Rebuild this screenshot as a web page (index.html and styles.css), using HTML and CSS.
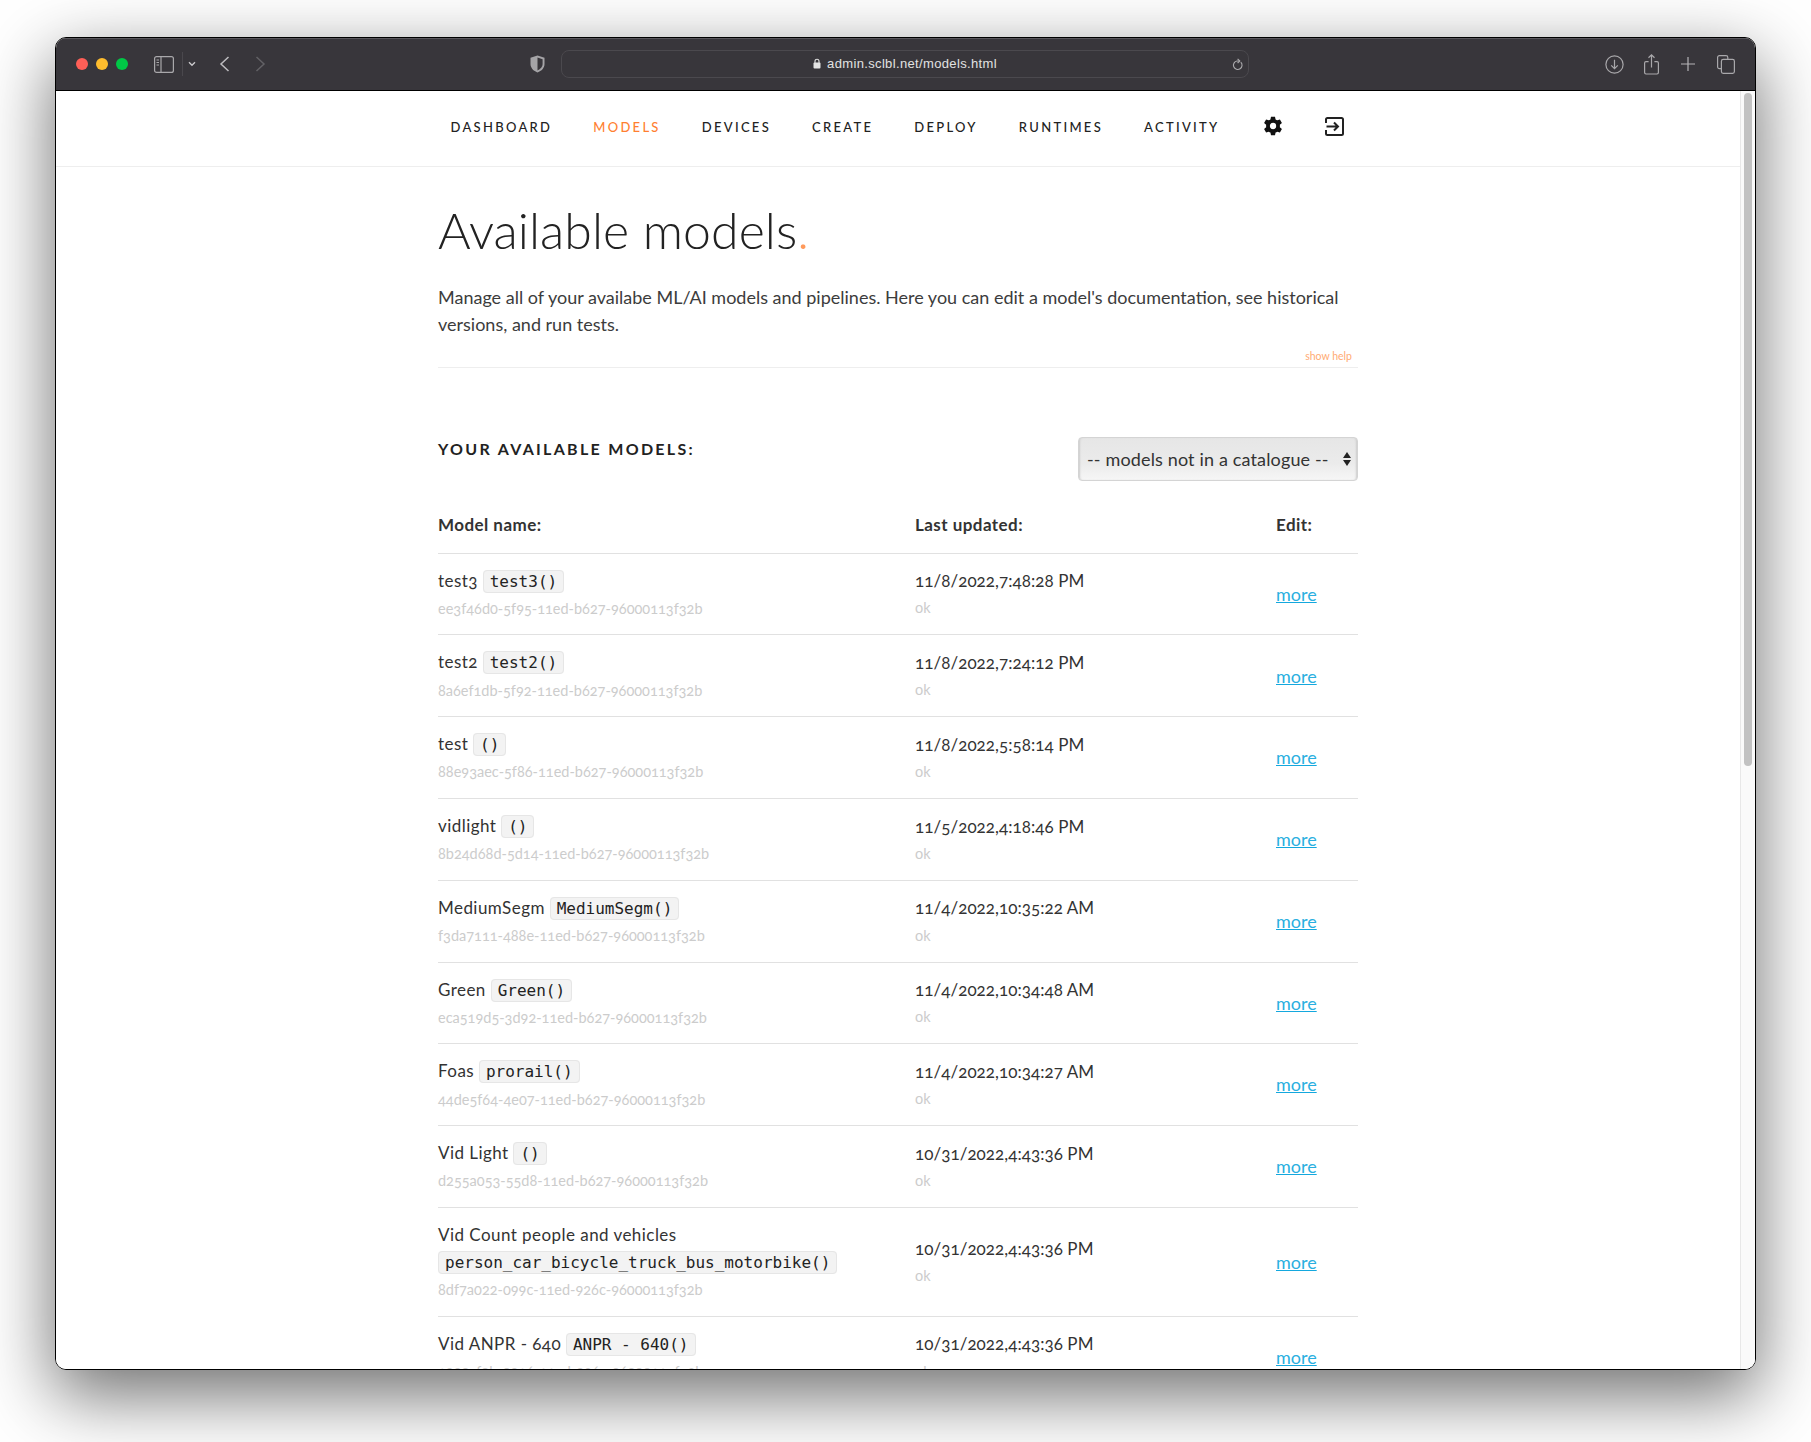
FILE: index.html
```html
<!DOCTYPE html>
<html lang="en">
<head>
    <meta charset="UTF-8">
    <meta name="viewport" content="width=device-width, initial-scale=1.0">
    <title>Available models</title>
    <link rel="stylesheet" href="styles.css">
</head>
<body>

<div class="window">
    <div class="toolbar">
        <span class="dot dot-red"></span>
        <span class="dot dot-yellow"></span>
        <span class="dot dot-green"></span>

        <svg class="tb-icon tb-sidebar" width="20" height="17" viewBox="0 0 20 17" fill="none" stroke="#a9a8ab" stroke-width="1.2">
            <rect x="0.6" y="0.6" width="18.8" height="15.8" rx="2"/>
            <path d="M7 0.6V16.4"/>
            <path d="M2.5 4H5M2.5 6.5H5M2.5 9H5" stroke-width="1"/>
        </svg>
        <span class="tb-sep"></span>
        <svg class="tb-icon tb-chevron" width="8" height="6" viewBox="0 0 8 6" fill="none" stroke="#c8c7ca" stroke-width="1.4">
            <path d="M1 1.2L4 4.2L7 1.2"/>
        </svg>
        <svg class="tb-icon tb-back" width="11" height="16" viewBox="0 0 11 16" fill="none" stroke="#bdbcbf" stroke-width="1.5">
            <path d="M9.5 1L2 8L9.5 15"/>
        </svg>
        <svg class="tb-icon tb-forward" width="11" height="16" viewBox="0 0 11 16" fill="none" stroke="#626165" stroke-width="1.5">
            <path d="M1.5 1L9 8L1.5 15"/>
        </svg>
        <svg class="tb-icon tb-shield" width="15" height="18" viewBox="0 0 15 18">
            <path d="M7.5 0.5L14.5 2.8V9C14.5 13 11.5 16 7.5 17.5C3.5 16 0.5 13 0.5 9V2.8Z" fill="#a5a4a7"/>
            <path d="M7.5 2.6L12.6 4.3V9C12.6 12 10.5 14.2 7.5 15.4Z" fill="#38363b"/>
        </svg>

        <div class="address">
            <svg class="lock" width="8" height="11" viewBox="0 0 8 11">
                <path d="M2 5V3.2C2 0.6 6 0.6 6 3.2V5" fill="none" stroke="#e4e4e4" stroke-width="1.1"/>
                <rect x="0.5" y="4.6" width="7" height="6" rx="1" fill="#e4e4e4"/>
            </svg>
            <span class="url">admin.sclbl.net/models.html</span>
            <svg class="reload" width="11" height="13" viewBox="0 0 11 13" fill="none" stroke="#a9a8ab" stroke-width="1.1">
                <path d="M8.8 4.2A4.3 4.3 0 1 1 5 3H7.5"/>
                <path d="M5.6 0.8L7.8 3L5.6 5"/>
            </svg>
        </div>

        <svg class="tb-icon tb-download" width="19" height="19" viewBox="0 0 19 19" fill="none" stroke="#a9a8ab" stroke-width="1.2">
            <circle cx="9.5" cy="9.5" r="8.6"/>
            <path d="M9.5 4.8V13.6M6.2 10.4L9.5 13.7L12.8 10.4"/>
        </svg>
        <svg class="tb-icon tb-share" width="15" height="21" viewBox="0 0 15 21" fill="none" stroke="#a9a8ab" stroke-width="1.2">
            <path d="M4.6 7.6H2A1.4 1.4 0 0 0 0.6 9V18.6A1.4 1.4 0 0 0 2 20H13A1.4 1.4 0 0 0 14.4 18.6V9A1.4 1.4 0 0 0 13 7.6H10.4"/>
            <path d="M7.5 13.5V1M4.5 3.8L7.5 0.9L10.5 3.8"/>
        </svg>
        <svg class="tb-icon tb-plus" width="14" height="14" viewBox="0 0 14 14" fill="none" stroke="#b5b4b7" stroke-width="1.2">
            <path d="M7 0V14M0 7H14"/>
        </svg>
        <svg class="tb-icon tb-tabs" width="18" height="19" viewBox="0 0 18 19" fill="none" stroke="#a9a8ab" stroke-width="1.2">
            <path d="M4.4 13.6H2.4A1.8 1.8 0 0 1 0.6 11.8V2.4A1.8 1.8 0 0 1 2.4 0.6H9A1.8 1.8 0 0 1 10.8 2.4V4.4"/>
            <rect x="4.4" y="4.4" width="13" height="14" rx="1.8"/>
        </svg>
    </div>

    <div class="viewport">
        <nav class="topnav">
            <a href="#">DASHBOARD</a>
            <a href="#" class="active">MODELS</a>
            <a href="#">DEVICES</a>
            <a href="#">CREATE</a>
            <a href="#">DEPLOY</a>
            <a href="#">RUNTIMES</a>
            <a href="#">ACTIVITY</a>
            <svg class="nav-gear" width="20" height="20" viewBox="0 0 24 24">
                <path fill="#111" fill-rule="evenodd" d="M9.6 0.8H14.4L15.1 4.1C15.8 4.4 16.5 4.8 17.1 5.2L20.3 4.2L22.7 8.3L20.2 10.6C20.3 11.4 20.3 12.6 20.2 13.4L22.7 15.7L20.3 19.8L17.1 18.8C16.5 19.2 15.8 19.6 15.1 19.9L14.4 23.2H9.6L8.9 19.9C8.2 19.6 7.5 19.2 6.9 18.8L3.7 19.8L1.3 15.7L3.8 13.4C3.7 12.6 3.7 11.4 3.8 10.6L1.3 8.3L3.7 4.2L6.9 5.2C7.5 4.8 8.2 4.4 8.9 4.1ZM12 8.2A3.8 3.8 0 1 0 12 15.8A3.8 3.8 0 1 0 12 8.2Z"/>
            </svg>
            <svg class="nav-exit" width="19" height="19" viewBox="0 0 19 19" fill="none" stroke="#222" stroke-width="2">
                <path d="M1 6V2.5A1.5 1.5 0 0 1 2.5 1H16.5A1.5 1.5 0 0 1 18 2.5V16.5A1.5 1.5 0 0 1 16.5 18H2.5A1.5 1.5 0 0 1 1 16.5V13"/>
                <path d="M1.5 9.5H12.5M9 5.5L13 9.5L9 13.5"/>
            </svg>
        </nav>

        <main class="content">
            <h1>Available models<span class="orange">.</span></h1>
            <p class="intro">Manage all of your availabe ML/AI models and pipelines. Here you can edit a model's documentation, see historical versions, and run tests.</p>
            <div class="help-row"><a href="#" class="show-help">show help</a></div>

            <div class="list-head">
                <h3>YOUR AVAILABLE MODELS:</h3>
                <div class="select-wrap">
                    <select class="catalogue">
                        <option>-- models not in a catalogue --</option>
                    </select>
                </div>
            </div>

            <table class="models">
                <thead>
                    <tr><th class="col-name">Model name:</th><th class="col-date">Last updated:</th><th>Edit:</th></tr>
                </thead>
                <tbody>
                    <tr>
                        <td>test3 <code>test3()</code><small>ee3f46d0-5f95-11ed-b627-96000113f32b</small></td>
                        <td>11/8/2022,7:48:28 PM<small>ok</small></td>
                        <td><a href="#" class="more">more</a></td>
                    </tr>
                    <tr>
                        <td>test2 <code>test2()</code><small>8a6ef1db-5f92-11ed-b627-96000113f32b</small></td>
                        <td>11/8/2022,7:24:12 PM<small>ok</small></td>
                        <td><a href="#" class="more">more</a></td>
                    </tr>
                    <tr>
                        <td>test <code>()</code><small>88e93aec-5f86-11ed-b627-96000113f32b</small></td>
                        <td>11/8/2022,5:58:14 PM<small>ok</small></td>
                        <td><a href="#" class="more">more</a></td>
                    </tr>
                    <tr>
                        <td>vidlight <code>()</code><small>8b24d68d-5d14-11ed-b627-96000113f32b</small></td>
                        <td>11/5/2022,4:18:46 PM<small>ok</small></td>
                        <td><a href="#" class="more">more</a></td>
                    </tr>
                    <tr>
                        <td>MediumSegm <code>MediumSegm()</code><small>f3da7111-488e-11ed-b627-96000113f32b</small></td>
                        <td>11/4/2022,10:35:22 AM<small>ok</small></td>
                        <td><a href="#" class="more">more</a></td>
                    </tr>
                    <tr>
                        <td>Green <code>Green()</code><small>eca519d5-3d92-11ed-b627-96000113f32b</small></td>
                        <td>11/4/2022,10:34:48 AM<small>ok</small></td>
                        <td><a href="#" class="more">more</a></td>
                    </tr>
                    <tr>
                        <td>Foas <code>prorail()</code><small>44de5f64-4e07-11ed-b627-96000113f32b</small></td>
                        <td>11/4/2022,10:34:27 AM<small>ok</small></td>
                        <td><a href="#" class="more">more</a></td>
                    </tr>
                    <tr>
                        <td>Vid Light <code>()</code><small>d255a053-55d8-11ed-b627-96000113f32b</small></td>
                        <td>10/31/2022,4:43:36 PM<small>ok</small></td>
                        <td><a href="#" class="more">more</a></td>
                    </tr>
                    <tr>
                        <td>Vid Count people and vehicles <code class="code-block">person_car_bicycle_truck_bus_motorbike()</code><small>8df7a022-099c-11ed-926c-96000113f32b</small></td>
                        <td>10/31/2022,4:43:36 PM<small>ok</small></td>
                        <td><a href="#" class="more">more</a></td>
                    </tr>
                    <tr>
                        <td>Vid ANPR - 640 <code>ANPR - 640()</code><small>1990cf0b-0916-11ed-926c-96000113f32b</small></td>
                        <td>10/31/2022,4:43:36 PM<small>ok</small></td>
                        <td><a href="#" class="more">more</a></td>
                    </tr>
                </tbody>
            </table>
        </main>

        <div class="scrolltrack"><div class="scrollthumb"></div></div>
    </div>
</div>

</body>
</html>
```
FILE: styles.css
```css
html, body {
    margin: 0;
    height: 100%;
}
body {
    background: #fff;
    padding: 37px 55px 74px 55px;
    box-sizing: border-box;
    font-family: "Lato", "Open Sans", sans-serif;
    font-variant-numeric: oldstyle-nums;
    color: #333;
    overflow: hidden;
}

/* browser window */
.window {
    height: 1331px;
    border: 1px solid #000;
    border-radius: 11px;
    overflow: hidden;
    display: flex;
    flex-direction: column;
    box-shadow: 0 24px 70px 2px rgba(0, 0, 0, 0.56);
}
.toolbar {
    height: 52px;
    flex: none;
    background: #38363b;
    border-bottom: 1px solid #000;
    box-shadow: inset 0 1px 0 #59575c;
    display: flex;
    align-items: center;
    padding-left: 20px;
}
.dot {
    width: 12px;
    height: 12px;
    border-radius: 50%;
    margin-right: 8px;
}
.dot-red { background: #ff5f57; }
.dot-yellow { background: #ffbd2e; }
.dot-green { background: #00c846; }
.tb-icon { flex: none; }
.tb-sidebar { margin-left: 18px; }
.tb-sep {
    width: 1px;
    height: 24px;
    background: #4a484d;
    margin-left: 8px;
}
.tb-chevron { margin-left: 5px; }
.tb-back { margin-left: 23px; }
.tb-forward { margin-left: 25px; }
.tb-shield { margin-left: 264px; }
.address {
    width: 688px;
    height: 28px;
    box-sizing: border-box;
    margin: -1px 0 0 16px;
    border: 1px solid #4b494e;
    border-radius: 8px;
    display: flex;
    align-items: center;
    justify-content: center;
    position: relative;
    color: #e2e2e2;
    font-family: "Liberation Sans", sans-serif;
    font-size: 13px;
    letter-spacing: 0.35px;
}
.lock { margin-right: 6px; }
.reload {
    position: absolute;
    right: 5px;
    top: 7px;
}
.tb-download { margin-left: 356px; }
.tb-share { margin-left: 20px; }
.tb-plus { margin-left: 22px; }
.tb-tabs { margin-left: 22px; }

/* page inside the window */
.viewport {
    flex: 1;
    position: relative;
    overflow: hidden;
    background: #fff;
    padding-right: 15px;
}
.scrolltrack {
    position: absolute;
    top: 0;
    right: 0;
    bottom: 0;
    width: 15px;
    background: #fafafa;
    border-left: 1px solid #e8e8e8;
    box-sizing: border-box;
}
.scrollthumb {
    width: 8px;
    height: 673px;
    margin: 2px 0 0 3px;
    border-radius: 4px;
    background: #c2c2c2;
}

.topnav {
    height: 75px;
    border-bottom: 1px solid #eee;
    display: flex;
    align-items: center;
    justify-content: center;
    padding-right: 2px;
}
.topnav a {
    font-size: 13px;
    letter-spacing: 2.3px;
    color: #222;
    text-decoration: none;
    margin: -3px 41px 0 0;
    font-weight: 500;
}
.topnav a.active {
    color: #ff7f32;
}
.nav-gear { margin: -5px 0 0 2px; }
.nav-exit { margin: -5px 0 0 42px; }

.content {
    width: 920px;
    margin: 0 auto;
    font-size: 17px;
    line-height: 27.2px;
}
h1 {
    font-size: 50px;
    font-weight: 300;
    line-height: 60px;
    letter-spacing: 0.05px;
    color: #222;
    margin: 33px 0 0 0;
}
.orange { color: #ff9a5c; }
.intro {
    margin: 24px 0 0 0;
    font-weight: 400;
    font-size: 18px;
    color: #3c3c3c;
}
.help-row {
    text-align: right;
    padding-right: 6px;
    height: 29px;
    border-bottom: 1px solid #eee;
    line-height: 32px;
}
.show-help {
    font-size: 10.5px;
    color: #ffab73;
    text-decoration: none;
}
.list-head {
    display: flex;
    justify-content: space-between;
    margin-top: 69px;
}
h3 {
    font-size: 16px;
    font-weight: 700;
    letter-spacing: 2.3px;
    color: #222;
    margin: -2px 0 0 0;
}
.select-wrap {
    position: relative;
    width: 280px;
    height: 44px;
}
.select-wrap::before,
.select-wrap::after {
    content: "";
    position: absolute;
    right: 7px;
    border-left: 4px solid transparent;
    border-right: 4px solid transparent;
}
.select-wrap::before {
    top: 15px;
    border-bottom: 6px solid #222;
}
.select-wrap::after {
    top: 23px;
    border-top: 6px solid #222;
}
.catalogue {
    appearance: none;
    -webkit-appearance: none;
    width: 100%;
    height: 100%;
    box-sizing: border-box;
    padding: 0 8px;
    border: 1px solid #d4d4d4;
    border-radius: 4px;
    background: linear-gradient(#e6e6e6, #ebebeb 60%, #f6f6f6);
    box-shadow: inset 2px 0 2px -1px #ccc, inset -2px 0 2px -1px #ccc;
    font-family: inherit;
    font-size: 18px;
    font-weight: 400;
    letter-spacing: 0.15px;
    color: #333;
}

/* models table */
.models {
    width: 920px;
    border-collapse: collapse;
    margin-top: 15px;
    table-layout: fixed;
}
.col-name { width: 477px; }
.col-date { width: 361px; }
.models th {
    text-align: left;
    font-weight: 700;
    letter-spacing: 0.45px;
    padding: 15px 0 14px 0;
    color: #333;
    border-bottom: 1px solid #e1e1e1;
}
.models td {
    padding: 13px 0 12.4px 0;
    border-bottom: 1px solid #e1e1e1;
    vertical-align: top;
    letter-spacing: 0.45px;
}
.models td:nth-child(2) {
    vertical-align: middle;
    letter-spacing: 0.05px;
}
.models td:last-child {
    vertical-align: middle;
}
.models small {
    display: block;
    font-size: 14.5px;
    color: #ccc;
    font-weight: 400;
    letter-spacing: 0;
}
code {
    font-family: "DejaVu Sans Mono", monospace;
    font-size: 16px;
    letter-spacing: 0;
    color: #222;
    background: #f3f3f3;
    border: 1px solid #e6e6e6;
    border-radius: 4px;
    padding: 1px 6px;
    white-space: pre;
}
.more {
    font-size: 18px;
    letter-spacing: 0;
    color: #2aafe0;
    text-decoration-color: #14a8de;
}
```
